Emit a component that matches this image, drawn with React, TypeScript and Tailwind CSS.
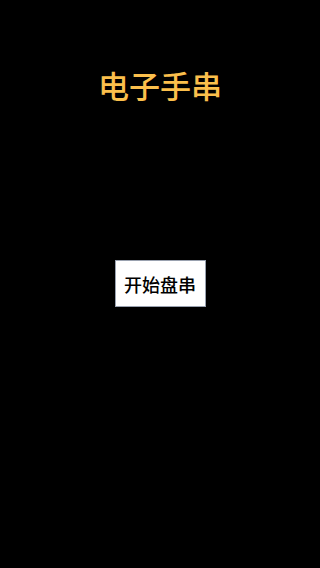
export default function App() {
  return (
    <div className="w-full h-[568px] bg-black flex flex-col items-center font-['Noto_Sans_CJK_SC',sans-serif]">
      <h1 className="mt-[64px] text-[31px] leading-[42px] font-medium text-[#fbbf4c]">电子手串</h1>
      <button className="mt-[154px] w-[91px] h-[47px] bg-white border border-gray-400 text-black text-[18px] leading-none font-medium">
        开始盘串
      </button>
    </div>
  );
}
